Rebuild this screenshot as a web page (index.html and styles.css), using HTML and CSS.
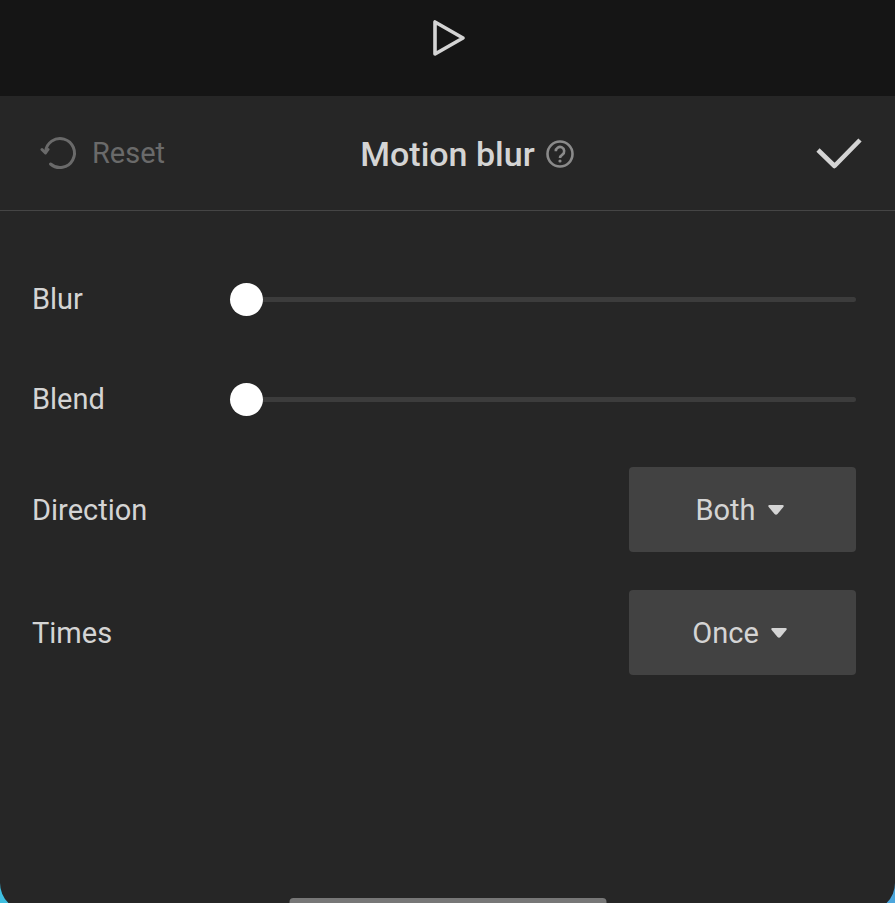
FILE: index.html
```html
<!DOCTYPE html>
<html lang="en">
<head>
  <meta charset="UTF-8" />
  <meta name="viewport" content="width=device-width, initial-scale=1" />
  <title>Motion blur</title>
  <link rel="stylesheet" href="styles.css">
</head>
<body>
  <div class="screen">
    <div class="player">
      <button class="icon-btn" aria-label="Play">
        <svg width="36" height="40" viewBox="0 0 36 40" fill="none" stroke="currentColor" stroke-width="3.6" stroke-linejoin="round">
          <path d="M5 4v32L33 20z" />
        </svg>
      </button>
    </div>

    <main class="sheet">
      <header class="sheet-header">
        <button class="reset" disabled>
          <svg width="38" height="36" viewBox="0 0 38 36" fill="none" stroke="currentColor" stroke-width="3" stroke-linecap="round" stroke-linejoin="round">
            <path d="M5.500 17A14.500 14.500 0 1 1 10.500 29" />
            <path d="M2 14.500l3.500 3.500 2.500-3.500" />
          </svg>
          Reset
        </button>
        <div class="title">
          <h1>Motion blur</h1>
          <button class="icon-btn help" aria-label="Help">
            <svg width="28" height="28" viewBox="0 0 28 28" fill="none" stroke="currentColor" stroke-width="2.6">
              <circle cx="14" cy="14" r="12.5" />
              <path d="M9.8 11.2a4.2 4.2 0 1 1 6.6 3.4c-1.5 1-2.4 1.6-2.4 3.4" />
              <circle cx="14" cy="21" r="1.6" fill="currentColor" stroke="none" />
            </svg>
          </button>
        </div>
        <button class="icon-btn confirm" aria-label="Done">
          <svg width="48" height="34" viewBox="0 0 48 34" fill="none" stroke="currentColor" stroke-width="4.6" stroke-linejoin="round">
            <path d="M3 14l16.500 16L45 4" />
          </svg>
        </button>
      </header>

      <form class="settings">
        <div class="row">
          <label for="blur">Blur</label>
          <input id="blur" type="range" min="0" max="100" value="0" />
        </div>
        <div class="row">
          <label for="blend">Blend</label>
          <input id="blend" type="range" min="0" max="100" value="0" />
        </div>
        <div class="row row-select">
          <label for="direction">Direction</label>
          <div class="dropdown">
            <select id="direction">
              <option>Both</option>
              <option>Forward</option>
              <option>Backward</option>
            </select>
            <svg class="arrow" width="16" height="10" viewBox="0 0 16 10" fill="currentColor"><path d="M1.5 0h13q2 .4 .8 2L9.500 9q-1.500 1.400-3 0L.7 2Q-.5 .4 1.500 0z" /></svg>
          </div>
        </div>
        <div class="row row-select">
          <label for="times">Times</label>
          <div class="dropdown">
            <select id="times">
              <option>Once</option>
              <option>Twice</option>
              <option>4 times</option>
            </select>
            <svg class="arrow" width="16" height="10" viewBox="0 0 16 10" fill="currentColor"><path d="M1.5 0h13q2 .4 .8 2L9.500 9q-1.500 1.400-3 0L.7 2Q-.5 .4 1.500 0z" /></svg>
          </div>
        </div>
      </form>
    </main>

    <div class="home-bar"></div>
  </div>
</body>
</html>
```

FILE: styles.css
```css
:root {
  --bg-player: #151515;
  --bg-sheet: #262626;
  --bg-control: #424242;
  --track: #3c3c3c;
  --text: #d4d4d4;
  --muted: #6a6a6a;
}

* {
  box-sizing: border-box;
}

body {
  margin: 0;
  font-family: Roboto, sans-serif;
  font-size: 29px;
  line-height: 34px;
  color: var(--text);
}

button, select {
  padding: 0;
  border: none;
  background: none;
  color: inherit;
  font: inherit;
  cursor: pointer;
}

svg {
  display: block;
}

.screen {
  position: relative;
  display: flex;
  flex-direction: column;
  height: 100vh;
  overflow: hidden;
  background: linear-gradient(to right, #3fbfe0, #4ba6dc);
}

.player {
  display: flex;
  justify-content: center;
  align-items: flex-start;
  height: 96px;
  padding-top: 18px;
  background: var(--bg-player);
}

/* runs past the bottom edge so only part of the rounded corners shows */
.sheet {
  flex: 1;
  margin-bottom: -8px;
  background: var(--bg-sheet);
  border-radius: 0 0 28px 28px;
}

.sheet-header {
  display: grid;
  grid-template-columns: 1fr auto 1fr;
  align-items: center;
  height: 115px;
  padding: 0 32px;
  border-bottom: 1px solid #454545;
}

.reset {
  display: flex;
  align-items: center;
  gap: 14px;
  padding-left: 8px;
  color: var(--muted);
  cursor: default;
}

/* left padding balances the help icon so the heading stays centered */
.title {
  display: flex;
  align-items: center;
  gap: 11px;
  padding: 2px 0 0 39px;
}

h1 {
  margin: 0;
  font-size: 34px;
  line-height: 40px;
  font-weight: 500;
}

.help {
  color: #8a8a8a;
}

.confirm {
  justify-self: end;
}

.settings {
  padding: 38px 39px 0 32px;
}

.row {
  display: flex;
  align-items: center;
  height: 100px;
}

.row label {
  width: 198px;
}

.row-select {
  justify-content: space-between;
  height: 85px;
  margin-bottom: 38px;
}

.row + .row-select {
  margin-top: 18px;
}

.row-select + .row-select {
  margin-top: 0;
}

input[type="range"] {
  flex: 1;
  height: 34px;
  margin: 0;
  appearance: none;
  background: none;
}

input[type="range"]::-webkit-slider-runnable-track {
  height: 5px;
  border-radius: 3px;
  background: var(--track);
}

input[type="range"]::-webkit-slider-thumb {
  appearance: none;
  width: 33px;
  height: 33px;
  margin-top: -14px;
  border-radius: 50%;
  background: #fff;
}

.dropdown {
  display: flex;
  justify-content: center;
  align-items: center;
  gap: 12px;
  width: 227px;
  height: 85px;
  padding-right: 6px;
  border-radius: 4px;
  background: var(--bg-control);
}

.dropdown select {
  appearance: none;
  field-sizing: content;
  height: 100%;
}

.arrow {
  pointer-events: none;
}

.home-bar {
  position: absolute;
  bottom: 0;
  left: 50%;
  width: 317px;
  height: 5px;
  transform: translateX(-50%);
  border-radius: 4px 4px 0 0;
  background: #777;
}
```
